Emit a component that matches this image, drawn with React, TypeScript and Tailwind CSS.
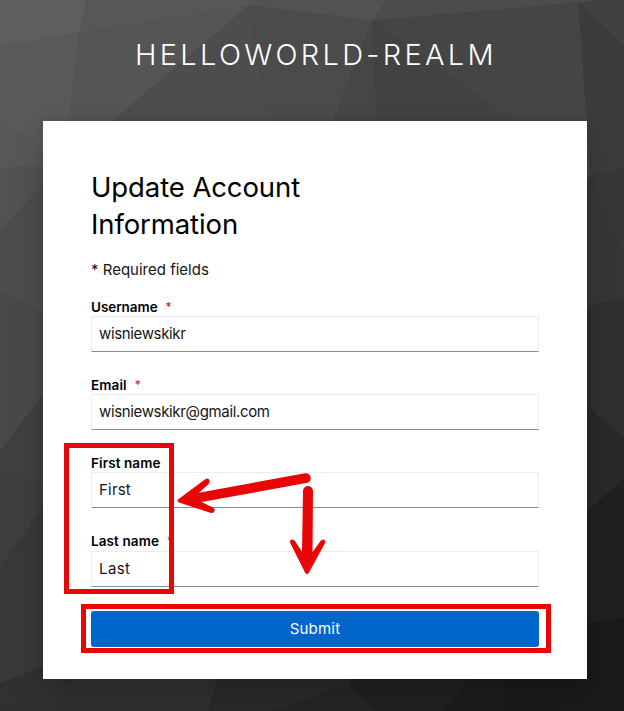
import React from "react";

const facets: [string, string][] = [
  ["0,0 87,0 80,33 0,47", "#5e5e5e"],
  ["87,0 250,0 249,6 80,33", "#575757"],
  ["0,47 80,33 69,121 69,164 0,122", "#595959"],
  ["80,33 249,6 113,121 69,165 69,121", "#555555"],
  ["249,6 269,121 269,180 60,180 113,121", "#4d4d4d"],
  ["250,0 387,0 373,21 249,6", "#525252"],
  ["249,6 373,21 333,121 300,200 269,180 269,121", "#4b4b4b"],
  ["373,21 379,121 379,180 310,180 333,121", "#464646"],
  ["387,0 600,0 579,3 373,21", "#4c4c4c"],
  ["373,21 579,3 591,177 587,182 512,121", "#454545"],
  ["373,21 512,121 587,182 379,182", "#424242"],
  ["579,3 600,0 624,0 624,47", "#414141"],
  ["579,3 624,47 624,168 591,177", "#3c3c3c"],
  ["0,122 43,148 70,162 43,165 0,169", "#575757"],
  ["0,169 43,165 70,162 43,186 0,231", "#525252"],
  ["0,231 43,186 90,140 90,333 43,313 0,292", "#4d4d4d"],
  ["0,292 43,313 90,333 43,395 0,452", "#494949"],
  ["0,452 43,395 90,333 90,499 43,485 0,472", "#404040"],
  ["0,472 43,485 90,499 43,508 0,568", "#3e3e3e"],
  ["0,568 43,508 90,450 90,649 43,667 0,684", "#393939"],
  ["0,684 43,667 90,649 58,679 61,711 0,711", "#313131"],
  ["570,182 591,177 624,168 624,299 587,307 570,310", "#363636"],
  ["591,177 624,168 624,254", "#383838"],
  ["570,310 587,307 624,299 624,438 587,408 570,395", "#303030"],
  ["570,395 587,408 624,438 624,480 589,510 570,523", "#292929"],
  ["570,523 589,510 624,480 624,618 587,624 570,627", "#202020"],
  ["570,627 587,624 624,618 624,711 503,711 506,679", "#1a1a1a"],
  ["58,679 55,640 230,640 218,679 209,711 61,711", "#303030"],
  ["218,679 230,640 350,640 353,679 351,684 275,711 209,711", "#2a2a2a"],
  ["351,684 376,711 275,711", "#252525"],
  ["351,684 353,640 500,640 471,679 443,711 376,711", "#202020"],
  ["471,679 500,640 506,679 503,711 443,711", "#1c1c1c"],
];

const fields = [
  { id: "username", label: "Username", value: "wisniewskikr", labelSpace: "tracking-[-0.05px]", valueSpace: "tracking-[-0.35px]" },
  { id: "email", label: "Email", value: "wisniewskikr@gmail.com", labelSpace: "tracking-[0.1px]", valueSpace: "tracking-[-0.35px]" },
  { id: "firstName", label: "First name", value: "First", labelSpace: "tracking-[0.1px]", valueSpace: "tracking-[0.2px]" },
  { id: "lastName", label: "Last name", value: "Last", labelSpace: "tracking-[0.1px]", valueSpace: "tracking-[0.4px]" },
];

function Background() {
  return (
    <svg className="absolute inset-0 h-full w-full" viewBox="0 0 624 711" aria-hidden="true">
      {facets.map(([points, fill]) => (
        <polygon key={points} points={points} fill={fill} stroke={fill} strokeWidth="1.2" />
      ))}
    </svg>
  );
}

function Annotations() {
  return (
    <>
      <div className="absolute left-[64px] top-[443px] h-[151px] w-[110px] border-5 border-[#e90606]" />
      <div className="absolute left-[81px] top-[604px] h-[49px] w-[470px] border-5 border-[#e90606]" />
      <svg className="absolute inset-0 h-full w-full" viewBox="0 0 624 711" aria-hidden="true" fill="#e90606">
        <path d="M178.3 499.3 L205.5 479 Q208 477.500 209.400 480 Q210.200 482 208.500 484 L199 492.700 L305 473.200 A5 5 0 0 1 307.500 482.800 L201.500 502 L213 507.500 Q216 510 214 512 Q212.500 513.500 209.500 512.500 L179 502.500 Q176.500 501 178.300 499.300 Z" />
        <path d="M303 491 A5 5 0 0 1 313 491 L312.500 552.300 L320.500 541 Q322.500 538.500 324.500 540 Q326 541.500 324.500 544 L309 572.500 Q307 575.500 305 572.500 L290.500 543.500 Q289 541 291.500 539.500 Q293.500 539 295 541 L302 551.700 Z" />
      </svg>
    </>
  );
}

export default function App() {
  return (
    <main className="relative h-[711px] w-[624px] overflow-hidden bg-[#333] font-['Inter',sans-serif] text-[#151515]">
      <Background />
      <div className="relative flex h-full flex-col">
        <header className="flex h-[121px] items-center justify-center pb-[12px] pl-[8px]">
          <div className="whitespace-nowrap text-[29px] font-[350] leading-9 tracking-[3.3px] text-white">HELLOWORLD-REALM</div>
        </header>
        <section className="ml-[43px] h-[558px] w-[544px] bg-white px-12 pt-[48px] shadow-[0_16px_32px_0_rgba(3,3,3,0.16),0_0_8px_0_rgba(3,3,3,0.1)]">
          <h1 className="w-[300px] text-[27.5px] font-normal leading-[37px] tracking-[-0.1px] text-black">
            Update Account<br />Information
          </h1>
          <p className="mt-[15px] text-[15px] leading-6">* Required fields</p>
          <form className="mt-[16px]" onSubmit={(e) => e.preventDefault()}>
            {fields.map((f) => (
              <div key={f.id} className="h-[78px] last-of-type:h-[79px]">
                <label
                  htmlFor={f.id}
                  className={
                    "flex items-start gap-2 text-[13.5px] font-semibold leading-[18px] text-black " +
                    (f.id === "lastName" ? "h-[19px]" : "h-[18px]")
                  }
                >
                  <span className={f.labelSpace}>{f.label}</span>
                  <span className="text-[12px] font-normal text-[#c9190b]">*</span>
                </label>
                <input
                  id={f.id}
                  defaultValue={f.value}
                  className={"block h-9 w-full border border-[#ededed] border-b-[#8a8d90] bg-white px-[7px] pb-[1px] text-[15px] outline-none " + f.valueSpace}
                />
              </div>
            ))}
            <button className="block h-9 w-full rounded-[3px] bg-[#06c] text-[15px] tracking-[0.2px] text-white">Submit</button>
          </form>
        </section>
      </div>
      <Annotations />
    </main>
  );
}
